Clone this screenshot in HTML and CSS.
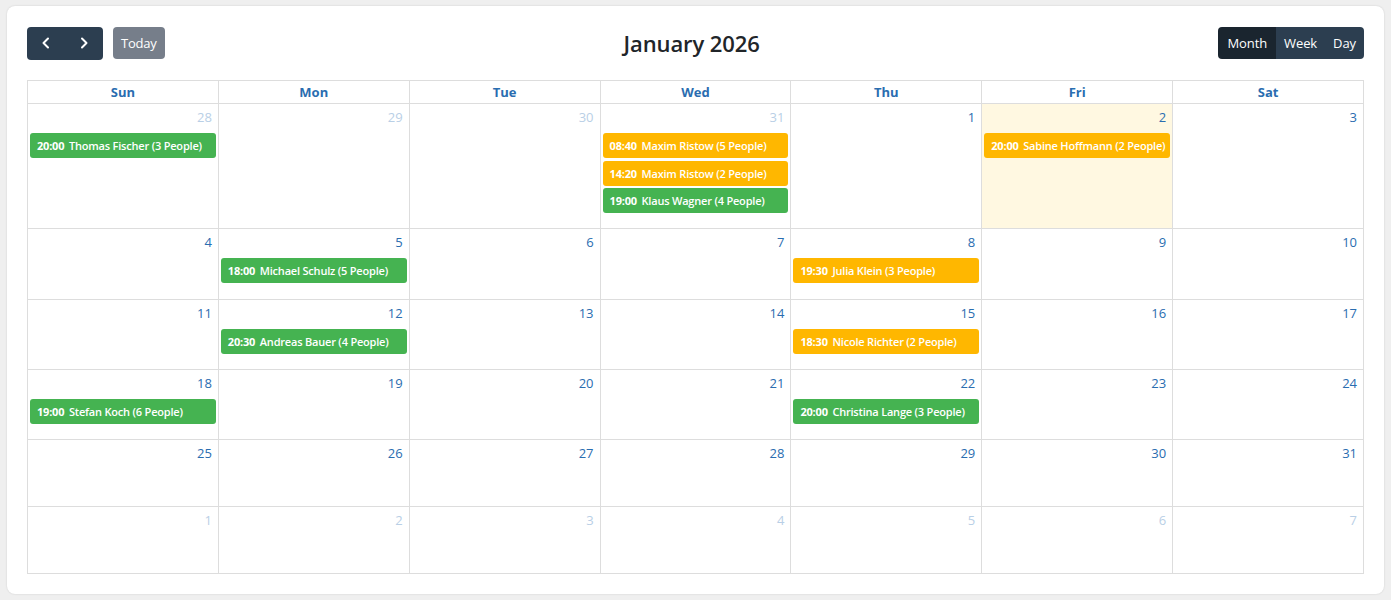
FILE: index.html
```html
<!DOCTYPE html>
<html>
<head>
<meta charset="utf-8">
<link rel="stylesheet" href="styles.css">
</head>
<body>
<div class="card">
  <div class="toolbar">
    <div class="tb-left">
      <div class="btn-group">
        <button class="btn btn-icon" aria-label="prev"><svg width="14" height="14" viewBox="0 0 14 14"><path d="M9 2.5 L4.5 7 L9 11.5" fill="none" stroke="#fff" stroke-width="2" stroke-linecap="round" stroke-linejoin="round"/></svg></button>
        <button class="btn btn-icon" aria-label="next"><svg width="14" height="14" viewBox="0 0 14 14"><path d="M5 2.5 L9.5 7 L5 11.5" fill="none" stroke="#fff" stroke-width="2" stroke-linecap="round" stroke-linejoin="round"/></svg></button>
      </div>
      <button class="btn btn-today">Today</button>
    </div>
    <h2 class="title">January 2026</h2>
    <div class="tb-right">
      <div class="btn-group">
        <button class="btn btn-view active">Month</button>
        <button class="btn btn-view">Week</button>
        <button class="btn btn-view">Day</button>
      </div>
    </div>
  </div>

  <div class="grid">
    <div class="hd">Sun</div><div class="hd">Mon</div><div class="hd">Tue</div><div class="hd">Wed</div><div class="hd">Thu</div><div class="hd">Fri</div><div class="hd last">Sat</div>

    <div class="day other"><div class="num">28</div><div class="ev green"><b>20:00</b> Thomas Fischer (3 People)</div></div>
    <div class="day other"><div class="num">29</div></div>
    <div class="day other"><div class="num">30</div></div>
    <div class="day other"><div class="num">31</div><div class="ev orange"><b>08:40</b> Maxim Ristow (5 People)</div><div class="ev orange"><b>14:20</b> Maxim Ristow (2 People)</div><div class="ev green"><b>19:00</b> Klaus Wagner (4 People)</div></div>
    <div class="day"><div class="num">1</div></div>
    <div class="day today"><div class="num">2</div><div class="ev orange"><b>20:00</b> Sabine Hoffmann (2 People)</div></div>
    <div class="day last"><div class="num">3</div></div>

    <div class="day"><div class="num">4</div></div>
    <div class="day"><div class="num">5</div><div class="ev green"><b>18:00</b> Michael Schulz (5 People)</div></div>
    <div class="day"><div class="num">6</div></div>
    <div class="day"><div class="num">7</div></div>
    <div class="day"><div class="num">8</div><div class="ev orange"><b>19:30</b> Julia Klein (3 People)</div></div>
    <div class="day"><div class="num">9</div></div>
    <div class="day last"><div class="num">10</div></div>

    <div class="day"><div class="num">11</div></div>
    <div class="day"><div class="num">12</div><div class="ev green"><b>20:30</b> Andreas Bauer (4 People)</div></div>
    <div class="day"><div class="num">13</div></div>
    <div class="day"><div class="num">14</div></div>
    <div class="day"><div class="num">15</div><div class="ev orange"><b>18:30</b> Nicole Richter (2 People)</div></div>
    <div class="day"><div class="num">16</div></div>
    <div class="day last"><div class="num">17</div></div>

    <div class="day"><div class="num">18</div><div class="ev green"><b>19:00</b> Stefan Koch (6 People)</div></div>
    <div class="day"><div class="num">19</div></div>
    <div class="day"><div class="num">20</div></div>
    <div class="day"><div class="num">21</div></div>
    <div class="day"><div class="num">22</div><div class="ev green"><b>20:00</b> Christina Lange (3 People)</div></div>
    <div class="day"><div class="num">23</div></div>
    <div class="day last"><div class="num">24</div></div>

    <div class="day"><div class="num">25</div></div>
    <div class="day"><div class="num">26</div></div>
    <div class="day"><div class="num">27</div></div>
    <div class="day"><div class="num">28</div></div>
    <div class="day"><div class="num">29</div></div>
    <div class="day"><div class="num">30</div></div>
    <div class="day last"><div class="num">31</div></div>

    <div class="day other bottom"><div class="num">1</div></div>
    <div class="day other bottom"><div class="num">2</div></div>
    <div class="day other bottom"><div class="num">3</div></div>
    <div class="day other bottom"><div class="num">4</div></div>
    <div class="day other bottom"><div class="num">5</div></div>
    <div class="day other bottom"><div class="num">6</div></div>
    <div class="day other bottom last"><div class="num">7</div></div>
  </div>
</div>
</body>
</html>
```

FILE: styles.css
```css
* { box-sizing: border-box; }
html, body { margin: 0; padding: 0; }
body {
  background: #efefef;
  font-family: "Open Sans", "Noto Sans", sans-serif;
  padding: 6px 7px;
}
.card {
  background: #fff;
  border-radius: 8px;
  box-shadow: 0 0 2px rgba(0,0,0,0.15);
  padding: 20px 20px 21px 20px;
  height: 588px;
}
.toolbar {
  display: flex;
  align-items: center;
  justify-content: space-between;
  height: 34px;
  margin-bottom: 20px;
}
.tb-left, .tb-right { display: flex; align-items: center; gap: 10px; }
.title {
  margin: 0;
  font-size: 22px;
  font-weight: 600;
  color: #212529;
  letter-spacing: -0.1px;
}
.btn {
  border: 0;
  font-family: inherit;
  color: #fff;
  background: #2c3e50;
  cursor: pointer;
}
.btn-group { display: flex; border-radius: 4px; overflow: hidden; }
.btn-icon {
  width: 38px;
  height: 33px;
  display: flex;
  align-items: center;
  justify-content: center;
  padding: 0;
}
.btn-today {
  background: #767e8a;
  border-radius: 4px;
  height: 32px;
  padding: 0 8px;
  font-size: 13px;
  letter-spacing: -0.2px;
}
.btn-view {
  height: 32px;
  font-size: 13px;
  padding: 0 8px;
  letter-spacing: -0.1px;
}
.btn-view.active { background: #1a252f; padding: 0 9px; }
.grid {
  display: grid;
  grid-template-columns: repeat(7, minmax(0, 1fr));
  border-top: 1px solid #ddd;
  border-left: 1px solid #ddd;
}
.hd {
  height: 23px;
  text-align: center;
  font-size: 13px;
  font-weight: 700;
  color: #2a6db0;
  line-height: 22px;
  border-right: 1px solid #ddd;
  border-bottom: 1px solid #ddd;
}
.day {
  min-height: 67px;
  border-right: 1px solid #ddd;
  border-bottom: 1px solid #ddd;
  padding: 0 2px 15.25px 2px;
  display: flex;
  flex-direction: column;
  gap: 2.5px;
}
.num {
  text-align: right;
  font-size: 13px;
  color: #2a6db0;
  height: 26.5px;
  flex: none;
  padding: 4px 4px 0 0;
  line-height: 18px;
}
.other .num { color: #b9cfe6; }
.today { background: #fff8e1; }
.ev {
  height: 25px;
  flex: none;
  border-radius: 3px;
  color: #fff;
  font-size: 11px;
  font-weight: 600;
  line-height: 25px;
  padding: 0 6px 0 7px;
  white-space: nowrap;
  overflow: hidden;
  letter-spacing: -0.2px;
}
.ev b { font-weight: 700; margin-right: 2px; }
.green { background: #45b351; }
.orange { background: #ffb700; }
```
